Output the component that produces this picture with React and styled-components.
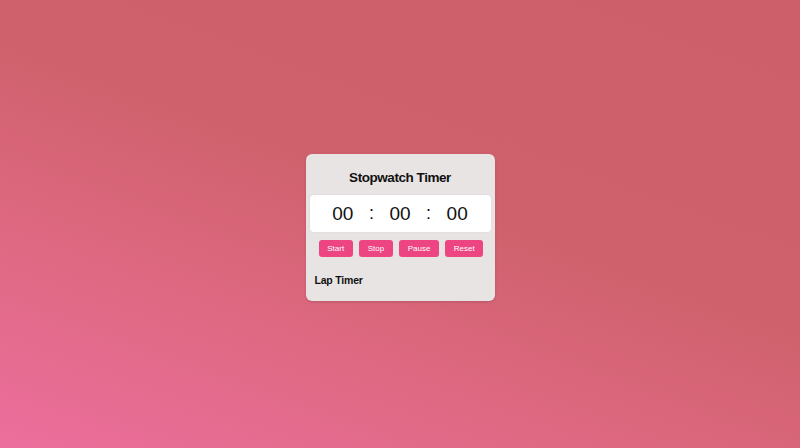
import styled, { createGlobalStyle } from "styled-components";

const Global = createGlobalStyle`
  html, body { margin: 0; padding: 0; height: 100%; }
  body {
    font-family: "Liberation Sans", Arial, sans-serif;
    background: linear-gradient(20deg, #ec6e9d 0%, #df6983 28%, #cf616c 55%, #cc5f69 100%);
  }
  #root { height: 100%; }
`;

const Page = styled.div`
  width: 800px;
  height: 448px;
  display: flex;
  align-items: center;
  justify-content: center;
  padding-top: 7px;
  box-sizing: border-box;
`;

const Card = styled.div`
  width: 189px;
  height: 147px;
  box-sizing: border-box;
  background: #e8e4e3;
  border-radius: 6px;
  box-shadow: 0 1px 3px rgba(0, 0, 0, 0.15);
  padding: 15px 4px 0;
  display: flex;
  flex-direction: column;
`;

const Title = styled.h2`
  margin: 0;
  font-size: 13.5px;
  letter-spacing: -0.45px;
  line-height: 18px;
  font-weight: 700;
  text-align: center;
  color: #111;
`;

const Display = styled.div`
  margin-top: 8px;
  height: 37px;
  background: #fff;
  border-radius: 4px;
  display: flex;
  align-items: center;
  justify-content: center;
  gap: 15.5px;
  font-size: 19px;
  color: #111;
  box-shadow: 0 0 2px rgba(0, 0, 0, 0.08);
`;

const Digits = styled.span`
  line-height: 1;
`;

const Colon = styled.span`
  line-height: 1;
  font-size: 18px;
  padding-bottom: 2px;
`;

const Buttons = styled.div`
  margin-top: 8px;
  display: flex;
  justify-content: center;
  gap: 6.5px;
  padding-left: 2px;
`;

const Button = styled.button`
  height: 17px;
  padding: 0 8.5px;
  border: none;
  border-radius: 3px;
  background: #ec4581;
  color: #fff;
  font-family: "Liberation Sans", Arial, sans-serif;
  font-size: 8px;
  cursor: pointer;
`;

const LapTitle = styled.h3`
  margin: 16px 0 0 5px;
  font-size: 10.5px;
  letter-spacing: -0.2px;
  line-height: 14px;
  font-weight: 700;
  color: #111;
`;

export default function App() {
  return (
    <>
      <Global />
      <Page>
        <Card>
          <Title>Stopwatch Timer</Title>
          <Display>
            <Digits>00</Digits>
            <Colon>:</Colon>
            <Digits>00</Digits>
            <Colon>:</Colon>
            <Digits>00</Digits>
          </Display>
          <Buttons>
            {["Start", "Stop", "Pause", "Reset"].map((label) => (
              <Button key={label}>{label}</Button>
            ))}
          </Buttons>
          <LapTitle>Lap Timer</LapTitle>
        </Card>
      </Page>
    </>
  );
}
